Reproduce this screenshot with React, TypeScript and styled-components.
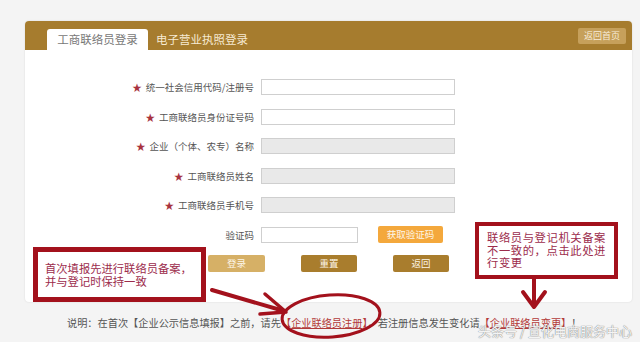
import React from 'react';
import styled, { createGlobalStyle } from 'styled-components';

const GlobalStyle = createGlobalStyle`
  html, body {
    margin: 0;
    padding: 0;
    background: #f4f4f4;
  }
  body {
    font-family: "Noto Sans CJK SC", "Noto Sans", sans-serif;
  }
`;

const Page = styled.div`
  position: relative;
  width: 640px;
  height: 342px;
  overflow: hidden;
  background: #f4f4f4;
  padding: 21px 0 0 25px;
  box-sizing: border-box;
`;

const Card = styled.div`
  width: 607px;
  height: 281px;
  background: #fff;
  border-radius: 4px;
  box-shadow: 0 0 2px rgba(0, 0, 0, 0.12);
  display: flex;
  flex-direction: column;
`;

const Header = styled.div`
  height: 29px;
  background: #a67c2e;
  border-radius: 4px 4px 0 0;
  display: flex;
  align-items: flex-end;
  padding: 0 6px 0 22px;
`;

const Tab = styled.div<{ $active?: boolean }>`
  height: 21px;
  padding: 0 ${(p) => (p.$active ? '10px' : '8px')};
  width: ${(p) => (p.$active ? '101px' : 'auto')};
  box-sizing: border-box;
  border-radius: 3px 3px 0 0;
  background: ${(p) => (p.$active ? '#fff' : 'transparent')};
  color: ${(p) => (p.$active ? '#777' : '#f6ead2')};
  font-size: 11.5px;
  line-height: 21px;
  text-align: center;
  white-space: nowrap;
`;

const HomeButton = styled.div`
  margin-left: auto;
  align-self: center;
  width: 48px;
  height: 16px;
  border-radius: 2px;
  background: #c6a05b;
  color: #f7ecd8;
  font-size: 9px;
  line-height: 16px;
  text-align: center;
`;

const Form = styled.div`
  display: flex;
  flex-direction: column;
  gap: 13.6px;
  padding-top: 29px;
`;

const Row = styled.div`
  display: flex;
  align-items: center;
  height: 16px;
`;

const Label = styled.div`
  width: 229px;
  padding-right: 7px;
  text-align: right;
  font-size: 9.5px;
  color: #555;
  white-space: nowrap;
`;

const Star = styled.span`
  color: #a8333f;
  font-size: 9.5px;
  margin-right: 4px;
`;

const Input = styled.div<{ $disabled?: boolean; $w?: number }>`
  width: ${(p) => p.$w ?? 194}px;
  height: 16px;
  box-sizing: border-box;
  border: 1px solid #cfcfcf;
  background: ${(p) => (p.$disabled ? '#e9e9e9' : '#fff')};
`;

const Button = styled.div<{ $bg: string; $w: number }>`
  width: ${(p) => p.$w}px;
  height: 17px;
  border-radius: 2px;
  background: ${(p) => p.$bg};
  color: #fdf6e8;
  font-size: 9.5px;
  line-height: 17px;
  text-align: center;
`;

const CodeButton = styled(Button)`
  margin-left: 20px;
`;

const ButtonRow = styled.div`
  display: flex;
  gap: 36px;
  padding-left: 183px;
  margin-top: -1.6px;
`;

const Footer = styled.div`
  padding: 14px 0 0 42px;
  font-size: 10.2px;
  line-height: 14px;
  color: #555;
  white-space: nowrap;
`;

const Link = styled.span`
  color: #b33a3a;
`;

const LinkText = styled.span`
  text-decoration: underline;
`;

const Note = styled.div<{
  $x: number;
  $y: number;
  $w: number;
  $h: number;
  $pt: number;
  $pl: number;
  $bw: number;
}>`
  position: absolute;
  left: ${(p) => p.$x}px;
  top: ${(p) => p.$y}px;
  width: ${(p) => p.$w}px;
  height: ${(p) => p.$h}px;
  box-sizing: border-box;
  border: ${(p) => p.$bw}px solid #a3111c;
  background: #fff;
  color: #9c2c4c;
  font-size: 11.3px;
  line-height: 12.5px;
  padding: ${(p) => p.$pt}px 0 0 ${(p) => p.$pl}px;
  white-space: nowrap;
`;

const NoteLine = styled.div<{ $ls: number }>`
  letter-spacing: ${(p) => p.$ls}px;
`;

const Marks = styled.svg`
  position: absolute;
  left: 0;
  top: 0;
  pointer-events: none;
`;

const Watermark = styled.div`
  position: absolute;
  left: 478px;
  top: 323px;
  font-size: 13px;
  line-height: 16px;
  color: rgba(255, 255, 255, 0.92);
  text-shadow: 0 0 1px #888, 0 0 1px #888;
  white-space: nowrap;
`;

const fields = [
  { label: '统一社会信用代码/注册号', disabled: false },
  { label: '工商联络员身份证号码', disabled: false },
  { label: '企业（个体、农专）名称', disabled: true },
  { label: '工商联络员姓名', disabled: true },
  { label: '工商联络员手机号', disabled: true },
];

export default function App() {
  return (
    <>
      <GlobalStyle />
      <Page>
        <Card>
          <Header>
            <Tab $active>工商联络员登录</Tab>
            <Tab>电子营业执照登录</Tab>
            <HomeButton>返回首页</HomeButton>
          </Header>
          <Form>
            {fields.map((f) => (
              <Row key={f.label}>
                <Label>
                  <Star>★</Star>
                  {f.label}
                </Label>
                <Input $disabled={f.disabled} />
              </Row>
            ))}
            <Row>
              <Label>验证码</Label>
              <Input $w={97} />
              <CodeButton $bg="#f4a83c" $w={65}>获取验证码</CodeButton>
            </Row>
            <ButtonRow>
              <Button $bg="#d6b066" $w={57}>登录</Button>
              <Button $bg="#a97d2d" $w={56}>重置</Button>
              <Button $bg="#a97d2d" $w={56}>返回</Button>
            </ButtonRow>
          </Form>
        </Card>
        <Footer>
          说明：在首次【企业公示信息填报】之前，请先
          <Link>
            【<LinkText>企业联络员注册</LinkText>】
          </Link>
          ，若注册信息发生变化请
          <Link>
            【<LinkText>企业联络员变更</LinkText>】
          </Link>
          ！
        </Footer>

        <Note $x={33} $y={247} $w={173} $h={55} $pt={10} $pl={7} $bw={5}>
          <NoteLine $ls={0}>首次填报先进行联络员备案，</NoteLine>
          <NoteLine $ls={0}>并与登记时保持一致</NoteLine>
        </Note>
        <Note $x={475} $y={222} $w={143} $h={57} $pt={5} $pl={8} $bw={4}>
          <NoteLine $ls={0.6}>联络员与登记机关备案</NoteLine>
          <NoteLine $ls={0.6}>不一致的，点击此处进</NoteLine>
          <NoteLine $ls={0.6}>行变更</NoteLine>
        </Note>

        <Marks width="640" height="342" viewBox="0 0 640 342">
          <g stroke="#a3111c" fill="none" strokeLinecap="round" strokeLinejoin="round">
            <path d="M212 290 L284 311" strokeWidth="4" />
            <path d="M265 294 L286 312 L260 314" strokeWidth="3.5" />
            <path d="M534 279 L534 305" strokeWidth="4" />
            <path d="M523 292 L534 307 L545 292" strokeWidth="4" />
            <ellipse cx="331" cy="316" rx="49" ry="21" strokeWidth="3" transform="rotate(-4 331 316)" />
          </g>
        </Marks>
        <Watermark>头条号 / 宣化电商服务中心</Watermark>
      </Page>
    </>
  );
}
